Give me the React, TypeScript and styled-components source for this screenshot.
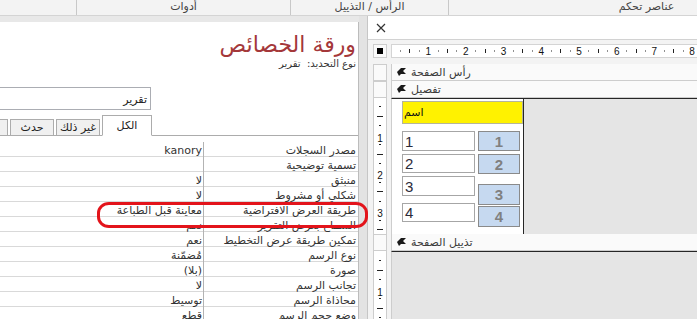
import React from "react";
import styled, { createGlobalStyle } from "styled-components";

const GlobalStyle = createGlobalStyle`
  html, body { margin: 0; padding: 0; background: #e6e6e6; }
  body { font-family: "DejaVu Sans", sans-serif; }
  * { box-sizing: border-box; }
`;

const Page = styled.div`
  position: relative;
  width: 697px;
  height: 319px;
  overflow: hidden;
  background: #e8e8e8;
  display: flex;
  flex-direction: column;
`;

const Ribbon = styled.div`
  flex: none;
  height: 16px;
  display: flex;
  background: #f3f3f3;
  border-bottom: 1px solid #d4d4d4;
`;

const RibbonGroup = styled.div<{ $w: number }>`
  flex: none;
  width: ${(p) => p.$w}px;
  height: 15px;
  border-right: 1px solid #c8c8c8;
  font-size: 11px;
  line-height: 14px;
  color: #444;
  text-align: center;
  white-space: nowrap;
  direction: rtl;
`;

const Workspace = styled.div`
  flex: 1;
  display: flex;
  min-height: 0;
`;

const SheetPanel = styled.div`
  flex: none;
  width: 359px;
  margin-top: 6px;
  background: #fff;
  border-right: 1px solid #bcbcbc;
  direction: rtl;
  overflow: hidden;
  display: flex;
  flex-direction: column;
`;

const Title = styled.div`
  padding: 9px 2px 0 0;
  font-size: 22px;
  line-height: 27px;
  color: #a4373a;
  white-space: nowrap;
`;

const SubTitle = styled.div`
  padding-right: 2px;
  font-size: 10px;
  line-height: 12px;
  color: #333;
  white-space: nowrap;
`;

const Combo = styled.div`
  margin: 17px 207px 0 0;
  width: 260px;
  height: 23px;
  flex: none;
  border: 1px solid #abadb3;
  padding: 2px 3px 0 0;
  font-size: 11px;
  line-height: 20px;
  color: #222;
`;

const TabStrip = styled.div`
  margin-top: 5px;
  height: 21px;
  flex: none;
  display: flex;
  align-items: flex-end;
  gap: 2px;
  padding-right: 206px;
  border-bottom: 1px solid #acacac;
`;

const Tab = styled.div<{ $active?: boolean; $w: number }>`
  flex: none;
  width: ${(p) => p.$w}px;
  height: ${(p) => (p.$active ? 21 : 17)}px;
  margin-bottom: -1px;
  border: 1px solid #acacac;
  border-bottom-color: ${(p) => (p.$active ? "#fff" : "#acacac")};
  background: ${(p) => (p.$active ? "#fff" : "#f0f0f0")};
  font-size: 11px;
  line-height: ${(p) => (p.$active ? 20 : 15)}px;
  text-align: center;
  color: #222;
  white-space: nowrap;
  overflow: hidden;
`;

const Grid = styled.div`
  margin-top: 6px;
  display: flex;
  flex-direction: column;
`;

const PropRow = styled.div`
  display: grid;
  grid-template-columns: 155px 1fr;
  height: 15px;
  border-bottom: 1px solid #d9d9d9;
  font-size: 11px;
  line-height: 12px;
  color: #333;
`;

const NameCell = styled.div`
  padding: 3px 2px 0 0;
  border-left: 1px solid #b3b3b3;
  white-space: nowrap;
`;

const ValueCell = styled.div`
  padding: 3px 1px 0 0;
  white-space: nowrap;
`;

const Splitter = styled.div`
  flex: none;
  width: 9px;
  background: #e3e3e3;
  border-right: 1px solid #c6c6c6;
`;

const DesignPanel = styled.div`
  flex: 1;
  display: flex;
  flex-direction: column;
  background: #f3f3f3;
  min-width: 0;
`;

const PanelHeader = styled.div`
  flex: none;
  height: 24px;
  background: #fff;
  border-bottom: 1px solid #d2d2d2;
  display: flex;
  align-items: center;
  padding-left: 8px;
`;

const DesignBody = styled.div`
  flex: 1;
  display: flex;
  flex-direction: column;
  padding: 4px 0 0 5px;
  min-height: 0;
`;

const DesignRow = styled.div<{ $h?: number; $gapAfter?: number }>`
  display: flex;
  gap: 4px;
  flex: ${(p) => (p.$h ? "none" : "1")};
  height: ${(p) => (p.$h ? `${p.$h}px` : "auto")};
  margin-bottom: ${(p) => p.$gapAfter ?? 0}px;
  min-height: 0;
`;

const Side = styled.div<{ $box?: boolean }>`
  flex: none;
  width: 14px;
  background: ${(p) => (p.$box ? "#fafafa" : "#fff")};
  border: 1px solid #cdcdcd;
  border-top-width: ${(p) => (p.$box ? 1 : 0)}px;
  border-bottom-width: ${(p) => (p.$box ? 1 : 0)}px;
  display: flex;
  align-items: center;
  justify-content: center;
  overflow: hidden;
`;

const RulerMain = styled.div`
  flex: 1;
  background: #fff;
  border-top: 1px solid #d4d4d4;
  border-bottom: 1px solid #d4d4d4;
  border-left: 1px solid #d4d4d4;
  overflow: hidden;
`;

const SectionBar = styled.div`
  flex: 1;
  display: flex;
  align-items: center;
  gap: 5px;
  padding-left: 5px;
  background: #fafafa;
  border-left: 1px solid #cdcdcd;
  border-bottom: 1px solid #cdcdcd;
  font-size: 11px;
  color: #3a3a3a;
  white-space: nowrap;
`;

const SectionArea = styled.div`
  flex: 1;
  display: flex;
  border-top: 1px solid #262626;
  border-left: 1px solid #cdcdcd;
  background: #e5e5e5;
  min-height: 0;
`;

const Surface = styled.div`
  position: relative;
  flex: none;
  width: 132px;
  background: #fff;
  border-right: 1px solid #262626;
`;

const Control = styled.div<{ $x: number; $y: number; $w: number; $h: number }>`
  position: absolute;
  left: ${(p) => p.$x}px;
  top: ${(p) => p.$y}px;
  width: ${(p) => p.$w}px;
  height: ${(p) => p.$h}px;
  display: flex;
  align-items: center;
`;

const YellowBox = styled(Control)`
  background: #fff200;
  border: 1px solid #b5b59a;
  padding-left: 1px;
  font-size: 11px;
  color: #111;
  direction: rtl;
  justify-content: flex-end;
`;

const TextBox = styled(Control)`
  background: #fff;
  border: 1px solid #a6a6a6;
  padding-left: 2px;
  font-family: "Liberation Sans", Arial, sans-serif;
  font-size: 15px;
  color: #2b2b3a;
`;

const LabelBox = styled(Control)`
  background: #c6d9f0;
  border: 1px solid #8a8a8a;
  justify-content: center;
  font-family: "Liberation Sans", Arial, sans-serif;
  font-weight: bold;
  font-size: 15px;
  color: #808080;
`;

const Overlay = styled.div`
  position: absolute;
  left: 97px;
  top: 202px;
  width: 271px;
  height: 26px;
  border: 3px solid #e3141b;
  border-radius: 12px / 11px;
  pointer-events: none;
`;

const rows: [string, string][] = [
  ["مصدر السجلات", "kanory"],
  ["تسمية توضيحية", ""],
  ["منبثق", "لا"],
  ["شكلي أو مشروط", "لا"],
  ["طريقة العرض الافتراضية", "معاينة قبل الطباعة"],
  ["السماح بعرض التقرير", "نعم"],
  ["تمكين طريقة عرض التخطيط", "نعم"],
  ["نوع الرسم", "مُضمّنة"],
  ["صورة", "(بلا)"],
  ["تجانب الرسم", "لا"],
  ["محاذاة الرسم", "توسيط"],
  ["وضع حجم الرسم", "قطع"],
];

const Q = 9.425;

function HRuler() {
  const items: React.ReactNode[] = [];
  for (let i = 1; i <= 33; i++) {
    const x = -1.5 + i * Q;
    if (i % 4 === 0) {
      items.push(
        <text key={i} x={x} y={10} fontSize="10" textAnchor="middle" fill="#111" fontFamily="Liberation Sans, Arial, sans-serif">
          {i / 4}
        </text>
      );
    } else if (i % 2 === 0) {
      items.push(<rect key={i} x={Math.round(x)} y={4} width={1} height={4} fill="#222" />);
    } else {
      items.push(<rect key={i} x={Math.round(x)} y={5.5} width={1} height={1} fill="#222" />);
    }
  }
  return (
    <svg width="310" height="12" style={{ display: "block" }}>
      {items}
    </svg>
  );
}

function VRuler({ height, origin }: { height: number; origin: number }) {
  const items: React.ReactNode[] = [];
  for (let i = 1; origin + i * Q < height + 4; i++) {
    const y = origin + i * Q;
    if (i % 4 === 0) {
      items.push(
        <text key={i} x={6} y={y + 7} fontSize="10" textAnchor="middle" fill="#111" fontFamily="Liberation Sans, Arial, sans-serif">
          {i / 4}
        </text>
      );
    } else if (i % 2 === 0) {
      items.push(<rect key={i} x={3} y={Math.round(y)} width={6} height={1} fill="#222" />);
    } else {
      items.push(<rect key={i} x={5} y={Math.round(y)} width={2} height={1} fill="#222" />);
    }
  }
  return (
    <svg width="12" height={height} style={{ display: "block", alignSelf: "flex-start" }}>
      {items}
    </svg>
  );
}

function SectionIcon() {
  return (
    <svg width="9" height="8" viewBox="0 0 9 8" style={{ flex: "none" }}>
      <path d="M0 4 L4 0 L9 0 L6 3 L9 6 L4 6 L2 8 Z" fill="#1a1a1a" />
    </svg>
  );
}

function CloseIcon() {
  return (
    <svg width="10" height="10" viewBox="0 0 10 10">
      <path d="M1 1 L9 9 M9 1 L1 9" stroke="#333" strokeWidth="1.2" />
    </svg>
  );
}

export default function App() {
  return (
    <>
      <GlobalStyle />
      <Page>
        <Ribbon>
          <RibbonGroup $w={77} />
          <RibbonGroup $w={214}>أدوات</RibbonGroup>
          <RibbonGroup $w={158}>الرأس / التذييل</RibbonGroup>
          <RibbonGroup $w={396}>عناصر تحكم</RibbonGroup>
        </Ribbon>
        <Workspace>
          <SheetPanel>
            <Title>ورقة الخصائص</Title>
            <SubTitle>نوع التحديد:&nbsp; تقرير</SubTitle>
            <Combo>تقرير</Combo>
            <TabStrip>
              <Tab $active $w={50}>الكل</Tab>
              <Tab $w={44}>غير ذلك</Tab>
              <Tab $w={44}>حدث</Tab>
              <Tab $w={44}>بيانات</Tab>
            </TabStrip>
            <Grid>
              {rows.map(([name, value]) => (
                <PropRow key={name}>
                  <NameCell>{name}</NameCell>
                  <ValueCell>{value}</ValueCell>
                </PropRow>
              ))}
            </Grid>
          </SheetPanel>
          <Splitter />
          <DesignPanel>
            <PanelHeader>
              <CloseIcon />
            </PanelHeader>
            <DesignBody>
              <DesignRow $h={14} $gapAfter={6}>
                <Side $box>
                  <svg width="6" height="6" style={{ display: "block" }}>
                    <rect width="6" height="6" fill="#000" />
                  </svg>
                </Side>
                <RulerMain>
                  <HRuler />
                </RulerMain>
              </DesignRow>
              <DesignRow $h={17}>
                <Side $box />
                <SectionBar>
                  <SectionIcon />
                  رأس الصفحة
                </SectionBar>
              </DesignRow>
              <DesignRow $h={17}>
                <Side $box />
                <SectionBar>
                  <SectionIcon />
                  تفصيل
                </SectionBar>
              </DesignRow>
              <DesignRow $h={136}>
                <Side>
                  <VRuler height={136} origin={-1} />
                </Side>
                <SectionArea>
                  <Surface>
                    <YellowBox $x={10} $y={2} $w={121} $h={23}>اسم</YellowBox>
                    <TextBox $x={10} $y={32} $w={73} $h={20}>1</TextBox>
                    <TextBox $x={10} $y={55} $w={73} $h={19}>2</TextBox>
                    <TextBox $x={10} $y={77} $w={73} $h={20}>3</TextBox>
                    <TextBox $x={10} $y={104} $w={73} $h={19}>4</TextBox>
                    <LabelBox $x={86} $y={32} $w={42} $h={20}>1</LabelBox>
                    <LabelBox $x={86} $y={55} $w={42} $h={20}>2</LabelBox>
                    <LabelBox $x={86} $y={85} $w={42} $h={21}>3</LabelBox>
                    <LabelBox $x={86} $y={107} $w={42} $h={21}>4</LabelBox>
                  </Surface>
                </SectionArea>
              </DesignRow>
              <DesignRow $h={17}>
                <Side $box />
                <SectionBar>
                  <SectionIcon />
                  تذييل الصفحة
                </SectionBar>
              </DesignRow>
              <DesignRow>
                <Side>
                  <VRuler height={70} origin={0} />
                </Side>
                <SectionArea />
              </DesignRow>
            </DesignBody>
          </DesignPanel>
        </Workspace>
        <Overlay />
      </Page>
    </>
  );
}
